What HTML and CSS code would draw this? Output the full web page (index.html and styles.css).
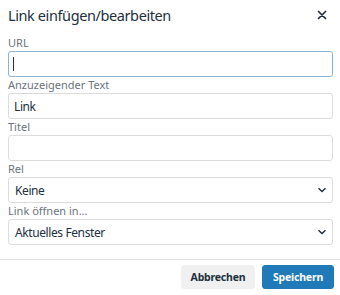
FILE: index.html
```html
<!DOCTYPE html>
<html lang="de">
    <head>
        <meta charset="UTF-8" />
        <meta name="viewport" content="width=device-width, initial-scale=1.0" />
        <title>Link einfügen/bearbeiten</title>
        <link rel="stylesheet" href="styles.css">
    </head>
    <body>
        <div class="dialog">
            <div class="dialog-header">
                <h1 class="dialog-title">Link einfügen/bearbeiten</h1>
                <button type="button" class="dialog-close" title="Schließen">
                    <svg width="10" height="10" viewBox="0 0 10 10">
                        <path d="M1.5 1.5l7 7M8.5 1.5l-7 7" stroke="#222f3e" stroke-width="1.7" stroke-linecap="round" fill="none" />
                    </svg>
                </button>
            </div>
            <form class="dialog-body" action="">
                <div class="field">
                    <label for="url">URL</label>
                    <div class="control">
                        <input type="text" id="url" class="input is-focused" />
                        <span class="caret"></span>
                    </div>
                </div>
                <div class="field">
                    <label for="text">Anzuzeigender Text</label>
                    <input type="text" id="text" class="input" value="Link" />
                </div>
                <div class="field">
                    <label for="title">Titel</label>
                    <input type="text" id="title" class="input" />
                </div>
                <div class="field">
                    <label for="rel">Rel</label>
                    <div class="control">
                        <select id="rel" class="input select">
                            <option>Keine</option>
                        </select>
                        <svg class="chevron" width="10" height="6" viewBox="0 0 10 6">
                            <path d="M1.5 1.2l3.5 3.3 3.5-3.3" stroke="#222f3e" stroke-width="1.5" fill="none" />
                        </svg>
                    </div>
                </div>
                <div class="field">
                    <label for="target">Link öffnen in...</label>
                    <div class="control">
                        <select id="target" class="input select">
                            <option>Aktuelles Fenster</option>
                        </select>
                        <svg class="chevron" width="10" height="6" viewBox="0 0 10 6">
                            <path d="M1.5 1.2l3.5 3.3 3.5-3.3" stroke="#222f3e" stroke-width="1.5" fill="none" />
                        </svg>
                    </div>
                </div>
            </form>
            <div class="dialog-footer">
                <button type="button" class="btn btn-secondary">Abbrechen</button>
                <button type="button" class="btn btn-primary">Speichern</button>
            </div>
        </div>
    </body>
</html>
```

FILE: styles.css
```css
* {
    box-sizing: border-box;
}

body {
    margin: 0;
    background: #fff;
    color: #222f3e;
    font-family: "Noto Sans", "Open Sans", sans-serif;
}

.dialog {
    width: 340px;
    height: 295px;
    background: #fff;
}

.dialog-header {
    display: flex;
    align-items: center;
    justify-content: space-between;
    height: 30px;
    padding: 0 13px 0 8px;
}

.dialog-title {
    margin: 0;
    font-size: 14.5px;
    font-weight: normal;
    letter-spacing: -0.4px;
    color: #222f3e;
}

.dialog-close {
    display: flex;
    padding: 0;
    border: 0;
    background: none;
    cursor: pointer;
}

.dialog-body {
    margin: 0;
    padding: 5px 7px 14px 8px;
}

.field label {
    display: block;
    height: 16px;
    font-size: 11px;
    line-height: 16px;
    color: #6b737c;
}

.control {
    position: relative;
}

.input {
    display: block;
    width: 100%;
    height: 26px;
    margin: 0;
    padding: 0 5px;
    border: 1px solid #dcdcdc;
    border-radius: 3px;
    background: #fff;
    color: #222f3e;
    font-family: inherit;
    font-size: 12px;
    letter-spacing: -0.4px;
    outline: none;
}

.input.is-focused {
    border-color: #86b3d8;
}

.caret {
    position: absolute;
    top: 6px;
    left: 5px;
    width: 1px;
    height: 14px;
    background: #333;
}

.select {
    padding-left: 6px;
    -webkit-appearance: none;
    appearance: none;
}

.chevron {
    position: absolute;
    top: 10px;
    right: 6px;
    pointer-events: none;
}

.dialog-footer {
    display: flex;
    justify-content: flex-end;
    gap: 7px;
    padding: 5px 6px 6px;
    border-top: 1px solid #e3e3e3;
}

.btn {
    height: 24px;
    padding: 0;
    border: 1px solid transparent;
    border-radius: 3px;
    font-family: inherit;
    font-size: 10.5px;
    font-weight: bold;
    letter-spacing: -0.2px;
    cursor: pointer;
}

.btn-secondary {
    width: 74px;
    color: #222f3e;
    background-color: #f0f0f0;
    border-color: #f0f0f0;
}

.btn-primary {
    width: 72px;
    color: #fff;
    background-color: #207ab7;
    border-color: #207ab7;
}
```
